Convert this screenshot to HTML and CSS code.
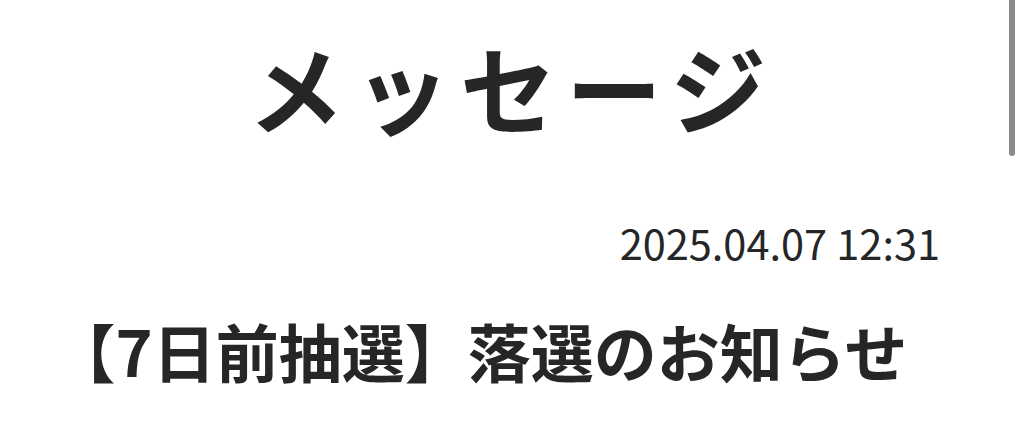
FILE: index.html
```html
<html lang="ja"><head><meta charset="utf8">
    <title>メッセージ</title>
    <meta name="viewport" content="width=device-width, user-scalable=no, maximum-scale=1.0">
    <link rel="stylesheet" href="styles.css">
    </head><body>
    <div class="page">
        <h1 class="page-title">メッセージ</h1>
        <article class="message">
            <p class="message-date">2025.04.07 12:31</p>
            <h2 class="message-title">【7日前抽選】落選のお知らせ</h2>
        </article>
    </div>
    <div class="scroll-thumb"></div>
    </body></html>
```

FILE: styles.css
```css
html, body {
    margin: 0;
    padding: 0;
    background: #fff;
}

body {
    font-family: "Noto Sans CJK JP", "Noto Sans", sans-serif;
    color: #242628;
    overflow: hidden;
}

.page {
    padding: 0 84px;
}

.page-title {
    margin: 0;
    padding-top: 28px;
    text-align: center;
    font-size: 96px;
    font-weight: 700;
    line-height: 1.2;
    letter-spacing: 10px;
}

.message {
    padding-top: 70px;
}

.message-date {
    margin: 0;
    text-align: right;
    font-size: 41.5px;
    font-weight: 400;
    line-height: 1.4;
}

/* opening bracket hangs into the padding, like text-spacing-trim */
.message-title {
    margin: 38px 0 0;
    text-indent: -0.5em;
    font-size: 63px;
    font-weight: 700;
    line-height: 1.3;
}

/* overlay scrollbar thumb */
.scroll-thumb {
    position: absolute;
    top: -4px;
    right: 9px;
    width: 6px;
    height: 160px;
    border-radius: 3px;
    background: #8a8a8a;
}
```
